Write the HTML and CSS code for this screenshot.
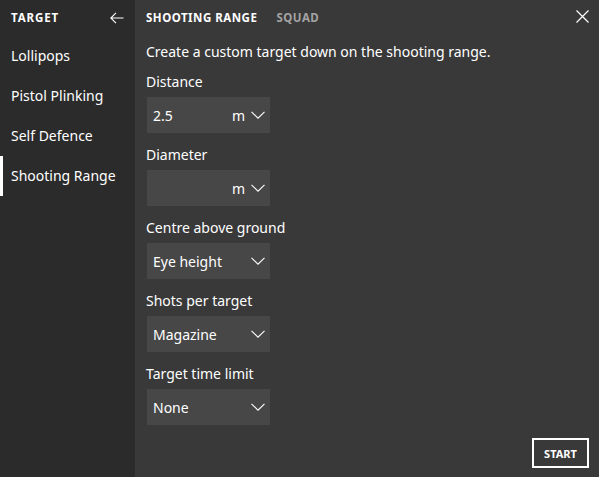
FILE: index.html
```html
<!DOCTYPE html>
<html>
<head>
<meta charset="utf-8">
<link rel="stylesheet" href="styles.css">
</head>
<body>
<div class="app">
  <aside class="sidebar">
    <div class="side-head">
      <span class="side-title">TARGET</span>
      <svg class="back" width="14" height="12" viewBox="0 0 14 12"><path d="M13.5 6H1M6 0.8L0.8 6L6 11.2" fill="none" stroke="#fff" stroke-width="1.1"/></svg>
    </div>
    <nav class="nav">
      <div class="nav-item">Lollipops</div>
      <div class="nav-item">Pistol Plinking</div>
      <div class="nav-item">Self Defence</div>
      <div class="nav-item active">Shooting Range</div>
    </nav>
  </aside>
  <main class="main">
    <div class="top">
      <div class="tabs">
        <span class="tab on">SHOOTING RANGE</span>
        <span class="tab">SQUAD</span>
      </div>
      <svg class="close" width="13" height="13" viewBox="0 0 13 13"><path d="M0.5 0.5L12.5 12.5M12.5 0.5L0.5 12.5" stroke="#fff" stroke-width="1.2"/></svg>
    </div>
    <p class="desc">Create a custom target down on the shooting range.</p>
    <div class="field">
      <div class="label">Distance</div>
      <div class="select"><span class="val">2.5</span><span class="unit">m</span><svg class="chev" width="14" height="8" viewBox="0 0 14 8"><path d="M0.5 0.8L7 7.2L13.5 0.8" fill="none" stroke="#fff" stroke-width="1.1"/></svg></div>
    </div>
    <div class="field">
      <div class="label">Diameter</div>
      <div class="select"><span class="val"></span><span class="unit">m</span><svg class="chev" width="14" height="8" viewBox="0 0 14 8"><path d="M0.5 0.8L7 7.2L13.5 0.8" fill="none" stroke="#fff" stroke-width="1.1"/></svg></div>
    </div>
    <div class="field">
      <div class="label">Centre above ground</div>
      <div class="select"><span class="val">Eye height</span><svg class="chev" width="14" height="8" viewBox="0 0 14 8"><path d="M0.5 0.8L7 7.2L13.5 0.8" fill="none" stroke="#fff" stroke-width="1.1"/></svg></div>
    </div>
    <div class="field">
      <div class="label">Shots per target</div>
      <div class="select"><span class="val">Magazine</span><svg class="chev" width="14" height="8" viewBox="0 0 14 8"><path d="M0.5 0.8L7 7.2L13.5 0.8" fill="none" stroke="#fff" stroke-width="1.1"/></svg></div>
    </div>
    <div class="field">
      <div class="label">Target time limit</div>
      <div class="select"><span class="val">None</span><svg class="chev" width="14" height="8" viewBox="0 0 14 8"><path d="M0.5 0.8L7 7.2L13.5 0.8" fill="none" stroke="#fff" stroke-width="1.1"/></svg></div>
    </div>
    <div class="footer">
      <button class="start">START</button>
    </div>
  </main>
</div>
</body>
</html>
```
FILE: styles.css
```css
* { box-sizing: border-box; }
html, body { margin: 0; padding: 0; }
body {
  font-family: "Noto Sans", "Open Sans", "DejaVu Sans", sans-serif;
  color: #fff;
  background: #393939;
}
.app {
  display: flex;
  width: 599px;
  height: 477px;
  overflow: hidden;
}
.sidebar {
  width: 135px;
  flex: none;
  background: #2b2b2b;
  display: flex;
  flex-direction: column;
}
.side-head {
  height: 35px;
  display: flex;
  align-items: center;
  justify-content: space-between;
  padding: 0 11px 0 11px;
}
.side-title {
  font-size: 11.5px;
  font-weight: 700;
  letter-spacing: 0.9px;
}
.nav {
  display: flex;
  flex-direction: column;
  padding-top: 1px;
}
.nav-item {
  height: 40px;
  line-height: 40px;
  font-size: 14px;
  border-left: 3px solid transparent;
  padding-left: 8px;
}
.nav-item.active {
  border-left-color: #fff;
}
.main {
  flex: 1;
  display: flex;
  flex-direction: column;
  padding: 0 10px 9px 11px;
  background: #393939;
}
.top {
  height: 35px;
  display: flex;
  align-items: center;
  justify-content: space-between;
}
.tabs { display: flex; gap: 19px; }
.tab {
  font-size: 11.5px;
  font-weight: 700;
  letter-spacing: 0.5px;
  color: #a3a3a3;
}
.tab.on { color: #fff; }
.close { margin-top: -2px; }
.desc {
  margin: 7px 0 0 0;
  font-size: 14px;
  line-height: 20px;
}
.field {
  display: flex;
  flex-direction: column;
  margin-top: 9px;
}
.field + .field { margin-top: 11px; }
.label {
  font-size: 14px;
  line-height: 20px;
  padding-top: 1px;
  margin-bottom: 5px;
}
.select {
  width: 123px;
  height: 36px;
  margin-left: 1px;
  background: #474747;
  display: flex;
  align-items: center;
  padding: 0 5px 0 6px;
  font-size: 14px;
}
.val { flex: 1; }
.unit { margin-right: 6px; }
.chev { flex: none; }
.footer {
  margin-top: auto;
  display: flex;
  justify-content: flex-end;
}
.start {
  width: 57px;
  height: 30px;
  background: transparent;
  border: 2px solid #fff;
  color: #fff;
  font-family: inherit;
  font-size: 11px;
  font-weight: 700;
  padding: 0;
}
```
